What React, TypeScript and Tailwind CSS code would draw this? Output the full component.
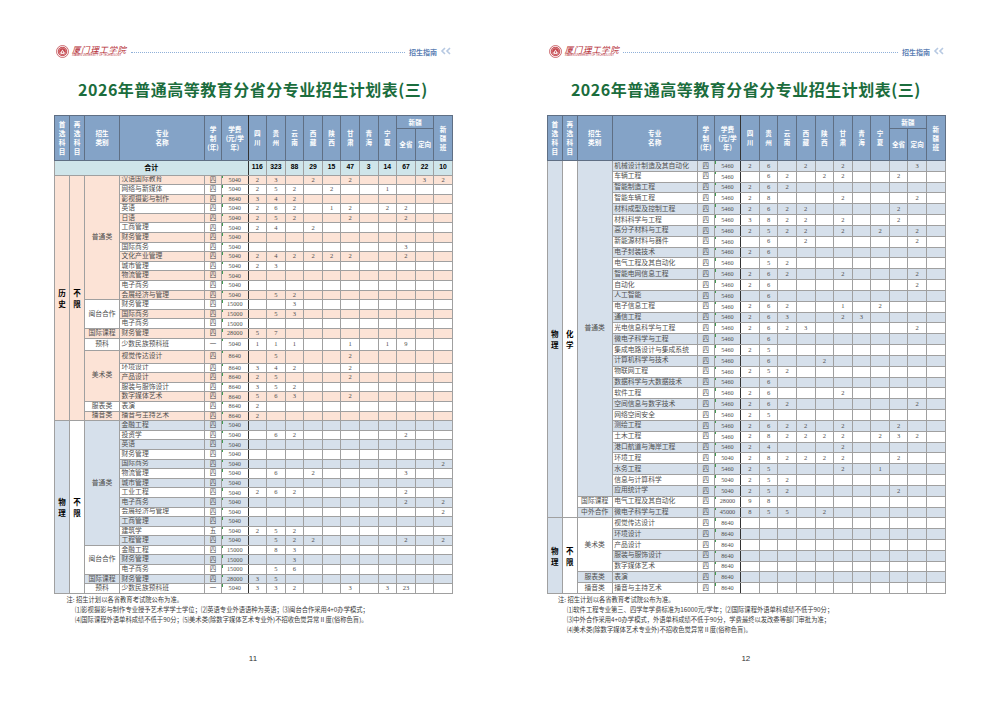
import React from "react";

type Row = { n: string; y: string; f: string; v: string; h?: string };
type Cat = { name: string; bg: string; rows: Row[] };
type Group = {
  a: string[];
  b: string[];
  aBg: string;
  bBg: string;
  shade: string;
  startShade: boolean;
  h: string;
  cats: Cat[];
};

const PINK = "bg-[#fce3d6]";
const BLUE = "bg-[#d6e0eb]";
const WHITE = "bg-white";

const r = (n: string, y: string, f: string, v: string, h?: string): Row => ({ n, y, f, v, h });

const leftGroups: Group[] = [
  {
    a: ["历", "史"],
    b: ["不", "限"],
    aBg: PINK,
    bBg: PINK,
    shade: PINK,
    startShade: true,
    h: "h-[9.6px]",
    cats: [
      {
        name: "普通类",
        bg: PINK,
        rows: [
          r("汉语国际教育", "四", "5040", "2,3,,2,,2,,,,3,2"),
          r("网络与新媒体", "四", "5040", "2,5,2,,2,,,1,,,"),
          r("影视摄影与制作", "四", "8640", "3,4,2"),
          r("英语", "四", "5040", "2,6,2,,1,2,,2,2,,"),
          r("日语", "四", "5040", "2,5,2,,,2,,,2,,"),
          r("工商管理", "四", "5040", "2,4,,2"),
          r("财务管理", "四", "5040", ""),
          r("国际商务", "四", "5040", ",,,,,,,,3"),
          r("文化产业管理", "四", "5040", "2,4,2,2,2,2,,,2"),
          r("城市管理", "四", "5040", "2,3"),
          r("物流管理", "四", "5040", ""),
          r("电子商务", "四", "5040", ""),
          r("会展经济与管理", "四", "5040", ",5,2"),
        ],
      },
      {
        name: "闽台合作",
        bg: WHITE,
        rows: [
          r("财务管理", "四", "15000", ",,3"),
          r("国际商务", "四", "15000", ",5,3"),
          r("电子商务", "四", "15000", ""),
        ],
      },
      { name: "国际课程", bg: PINK, rows: [r("财务管理", "四", "28000", "5,7")] },
      { name: "预科", bg: WHITE, rows: [r("少数民族预科班", "一", "5040", "1,1,1,,,1,,1,9", "h-[12px]")] },
      {
        name: "美术类",
        bg: PINK,
        rows: [
          r("视觉传达设计", "四", "8640", ",5,,,,2", "h-[13px]"),
          r("环境设计", "四", "8640", "3,4,2,,,2"),
          r("产品设计", "四", "8640", "2,5,,,,2"),
          r("服装与服饰设计", "四", "8640", "3,5,2"),
          r("数字媒体艺术", "四", "8640", "5,6,3,,,2"),
        ],
      },
      { name: "服表类", bg: WHITE, rows: [r("表演", "四", "8640", "2")] },
      { name: "播音类", bg: PINK, rows: [r("播音与主持艺术", "四", "8640", "2")] },
    ],
  },
  {
    a: ["物", "理"],
    b: ["不", "限"],
    aBg: BLUE,
    bBg: WHITE,
    shade: BLUE,
    startShade: true,
    h: "h-[9.6px]",
    cats: [
      {
        name: "普通类",
        bg: BLUE,
        rows: [
          r("金融工程", "四", "5040", ""),
          r("投资学", "四", "5040", ",6,2,,,,,,2"),
          r("英语", "四", "5040", ""),
          r("财务管理", "四", "5040", ""),
          r("国际商务", "四", "5040", ",,,,,,,,,,2"),
          r("物流管理", "四", "5040", ",6,,2,,,,,3"),
          r("城市管理", "四", "5040", ""),
          r("工业工程", "四", "5040", "2,6,2,,,,,,2"),
          r("电子商务", "四", "5040", ",,,,,,,,2,,2"),
          r("会展经济与管理", "四", "5040", ",,,,,,,,,,2"),
          r("工商管理", "四", "5040", ""),
          r("建筑学", "五", "5040", "2,5,2"),
          r("工程管理", "四", "5040", ",5,2,2,,,,,2,,2"),
        ],
      },
      {
        name: "闽台合作",
        bg: WHITE,
        rows: [
          r("金融工程", "四", "15000", ",8,3"),
          r("财务管理", "四", "15000", ",,3"),
          r("电子商务", "四", "15000", ",5,6"),
        ],
      },
      { name: "国际课程", bg: BLUE, rows: [r("财务管理", "四", "28000", "3,5")] },
      { name: "预科", bg: WHITE, rows: [r("少数民族预科班", "一", "5040", "3,3,2,,,3,,3,23")] },
    ],
  },
];

const rightGroups: Group[] = [
  {
    a: ["物", "理"],
    b: ["化", "学"],
    aBg: BLUE,
    bBg: WHITE,
    shade: BLUE,
    startShade: true,
    h: "h-[10.83px]",
    cats: [
      {
        name: "普通类",
        bg: BLUE,
        rows: [
          r("机械设计制造及其自动化", "四", "5460", "2,6,,2,,2,,,,3,"),
          r("车辆工程", "四", "5460", ",6,2,,2,2,,,2,,"),
          r("智能制造工程", "四", "5460", "2,6,2"),
          r("智能车辆工程", "四", "5460", "2,8,,,,2,,,,2,"),
          r("材料成型及控制工程", "四", "5460", "2,6,2,2,,,,,2"),
          r("材料科学与工程", "四", "5460", "3,8,2,2,,2,,,2"),
          r("高分子材料与工程", "四", "5460", "2,5,2,2,,2,,2,,2"),
          r("新能源材料与器件", "四", "5460", ",6,,2,,,,,,2"),
          r("电子封装技术", "四", "5460", "2,6"),
          r("电气工程及其自动化", "四", "5460", ",5,2"),
          r("智能电网信息工程", "四", "5460", "2,6,2,,,2,,,,2"),
          r("自动化", "四", "5460", "2,6,,,,,,,,2"),
          r("人工智能", "四", "5460", ",6"),
          r("电子信息工程", "四", "5460", "2,6,2,,,1,,2"),
          r("通信工程", "四", "5460", "2,6,3,,,2,3"),
          r("光电信息科学与工程", "四", "5460", "2,6,2,3,,,,,,2"),
          r("微电子科学与工程", "四", "5460", ",6"),
          r("集成电路设计与集成系统", "四", "5460", "2,5"),
          r("计算机科学与技术", "四", "5460", ",6,,,2"),
          r("物联网工程", "四", "5460", "2,5,2"),
          r("数据科学与大数据技术", "四", "5460", ",6"),
          r("软件工程", "四", "5460", "2,6,,,,2"),
          r("空间信息与数字技术", "四", "5460", "2,6,2,,,,,,,2"),
          r("网络空间安全", "四", "5460", "2,5"),
          r("测绘工程", "四", "5460", "2,6,2,2,,2,,,2"),
          r("土木工程", "四", "5460", "2,8,2,2,2,2,,2,3,2"),
          r("港口航道与海岸工程", "四", "5460", "2,4,,,,2"),
          r("环境工程", "四", "5040", "2,8,2,2,2,2,,,2"),
          r("水务工程", "四", "5460", "2,5,,,,2,,1"),
          r("信息与计算科学", "四", "5040", "2,5,2"),
          r("应用统计学", "四", "5040", "2,5,2,,,,,,2"),
        ],
      },
      { name: "国际课程", bg: WHITE, rows: [r("电气工程及其自动化", "四", "28000", "9,8")] },
      { name: "中外合作", bg: BLUE, rows: [r("微电子科学与工程", "四", "45000", "8,5,5,,2")] },
    ],
  },
  {
    a: ["物", "理"],
    b: ["不", "限"],
    aBg: BLUE,
    bBg: WHITE,
    shade: BLUE,
    startShade: false,
    h: "h-[10.83px]",
    cats: [
      {
        name: "美术类",
        bg: WHITE,
        rows: [
          r("视觉传达设计", "四", "8640", ""),
          r("环境设计", "四", "8640", ""),
          r("产品设计", "四", "8640", ""),
          r("服装与服饰设计", "四", "8640", ""),
          r("数字媒体艺术", "四", "8640", ""),
        ],
      },
      { name: "服表类", bg: BLUE, rows: [r("表演", "四", "8640", "")] },
      { name: "播音类", bg: WHITE, rows: [r("播音与主持艺术", "四", "8640", "")] },
    ],
  },
];

const leftTotals = ["116", "323", "88", "29", "15", "47", "3", "14", "67", "22", "10"];

const bd = "border border-[#a0a0a0]";
const hb = "border border-[#5f6f84]";
const serif = "font-['Liberation_Serif','Noto_Sans_CJK_SC',serif] text-[#4f4f4f]";
const thickR = "border-r-[1.5px] border-r-[#333333]";

function Stack({ chars }: { chars: string[] }) {
  return (
    <>
      {chars.map((c, i) => (
        <div key={i}>{c}</div>
      ))}
    </>
  );
}

function HeaderRows() {
  const th = `${hb} p-0 align-middle text-center font-bold text-white text-[6.6px] leading-[9px]`;
  const provinces = [
    ["四", "川"],
    ["贵", "州"],
    ["云", "南"],
    ["西", "藏"],
    ["陕", "西"],
    ["甘", "肃"],
    ["青", "海"],
    ["宁", "夏"],
  ];
  return (
    <thead className="bg-[#84a3c7] font-['Noto_Sans_CJK_SC',sans-serif]">
      <tr className="h-[13px]">
        <th rowSpan={2} className={th}>
          <Stack chars={["首", "选", "科", "目"]} />
        </th>
        <th rowSpan={2} className={th}>
          <Stack chars={["再", "选", "科", "目"]} />
        </th>
        <th rowSpan={2} className={th}>
          <Stack chars={["招生", "类别"]} />
        </th>
        <th rowSpan={2} className={th}>
          <Stack chars={["专业", "名称"]} />
        </th>
        <th rowSpan={2} className={th}>
          <Stack chars={["学", "制", "(年)"]} />
        </th>
        <th rowSpan={2} className={`${th} ${thickR}`}>
          <Stack chars={["学费", "(元/学", "年)"]} />
        </th>
        {provinces.map((p, i) => (
          <th key={i} rowSpan={2} className={th}>
            <Stack chars={p} />
          </th>
        ))}
        <th colSpan={2} className={th}>
          新疆
        </th>
        <th rowSpan={2} className={th}>
          <Stack chars={["新", "疆", "班"]} />
        </th>
      </tr>
      <tr className="h-[32px]">
        <th className={th}>全省</th>
        <th className={th}>定向</th>
      </tr>
    </thead>
  );
}

function DataTable({ groups, totals }: { groups: Group[]; totals?: string[] }) {
  return (
    <table className="table-fixed border-collapse w-[398px] border-[1.5px] border-[#333333]">
      <colgroup>
        <col className="w-[15px]" />
        <col className="w-[15px]" />
        <col className="w-[35px]" />
        <col className="w-[85px]" />
        <col className="w-[17px]" />
        <col className="w-[26.5px]" />
        {Array.from({ length: 11 }).map((_, i) => (
          <col key={i} className="w-[18.59px]" />
        ))}
      </colgroup>
      <HeaderRows />
      <tbody>
        {totals && (
          <tr className="h-[14.5px] bg-[#cfe5ea] font-['Liberation_Sans','Noto_Sans_CJK_SC',sans-serif] text-black font-bold">
            <td colSpan={6} className={`${bd} ${thickR} text-center text-[7px] leading-none`}>
              合计
            </td>
            {totals.map((t, i) => (
              <td key={i} className={`${bd} text-center text-[6.8px] leading-none`}>
                {t}
              </td>
            ))}
          </tr>
        )}
        {groups.map((g, gi) => {
          const total = g.cats.reduce((s, c) => s + c.rows.length, 0);
          let idx = 0;
          return g.cats.map((c, ci) =>
            c.rows.map((row, ri) => {
              const k = idx++;
              const shaded = g.startShade ? k % 2 === 0 : k % 2 === 1;
              const vals = row.v.split(",");
              while (vals.length < 11) vals.push("");
              const firstOfGroup = ci === 0 && ri === 0;
              return (
                <tr
                  key={`${gi}-${ci}-${ri}`}
                  className={`${row.h ?? g.h} ${shaded ? g.shade : WHITE} ${
                    firstOfGroup && gi > 0 ? "border-t-[1.5px] border-t-[#333333]" : ""
                  } ${serif}`}
                >
                  {firstOfGroup && (
                    <td
                      rowSpan={total}
                      className={`${bd} ${g.aBg} p-0 text-center font-bold text-black text-[7.5px] leading-[11px] font-['Noto_Sans_CJK_SC',sans-serif]`}
                    >
                      <Stack chars={g.a} />
                    </td>
                  )}
                  {firstOfGroup && (
                    <td
                      rowSpan={total}
                      className={`${bd} ${g.bBg} p-0 text-center font-bold text-black text-[7.5px] leading-[11px] font-['Noto_Sans_CJK_SC',sans-serif]`}
                    >
                      <Stack chars={g.b} />
                    </td>
                  )}
                  {ri === 0 && (
                    <td rowSpan={c.rows.length} className={`${bd} ${c.bg} p-0 text-center text-[6.8px] leading-none`}>
                      {c.name}
                    </td>
                  )}
                  <td className={`${bd} p-0 pl-[1.5px] text-left text-[6.8px] leading-none whitespace-nowrap overflow-hidden`}>
                    {row.n}
                  </td>
                  <td className={`${bd} p-0 text-center text-[6.5px] leading-none`}>{row.y}</td>
                  <td className={`${bd} ${thickR} relative p-0 text-center text-[6.2px] leading-none`}>
                    <span className="absolute left-0 top-0 w-[1px] h-[2.5px] bg-[#3f9b4f]" />
                    {row.f}
                  </td>
                  {vals.slice(0, 11).map((v, vi) => (
                    <td key={vi} className={`${bd} p-0 text-center text-[6.5px] leading-none`}>
                      {v}
                    </td>
                  ))}
                </tr>
              );
            })
          );
        })}
      </tbody>
    </table>
  );
}

function Emblem() {
  return (
    <svg width="13" height="13" viewBox="0 0 26 26" className="shrink-0">
      <circle cx="13" cy="13" r="12" fill="none" stroke="#b8323a" strokeWidth="1.4" />
      <circle cx="13" cy="13" r="9.5" fill="#c4474e" />
      <circle cx="13" cy="13" r="7.2" fill="none" stroke="#f3d3d5" strokeWidth="0.8" />
      <path d="M8 16 L13 9 L18 16 Z" fill="#f7e4e5" />
      <rect x="9" y="16" width="8" height="2" fill="#f7e4e5" />
      <rect x="12.2" y="12.5" width="1.6" height="3.5" fill="#c4474e" />
    </svg>
  );
}

function Chevrons() {
  return (
    <svg width="12" height="8" viewBox="0 0 12 8" className="ml-[3px] shrink-0">
      <path d="M5 1 L2 4 L5 7" fill="none" stroke="#b7c9e2" strokeWidth="1.6" />
      <path d="M10 1 L7 4 L10 7" fill="none" stroke="#b7c9e2" strokeWidth="1.6" />
    </svg>
  );
}

function PageHeader() {
  return (
    <div className="flex items-center h-[18px]">
      <div className="ml-[2px] flex items-center">
        <Emblem />
        <div className="ml-[3px] flex flex-col items-start">
          <span className="text-[8.5px] leading-[9px] tracking-[0.6px] text-[#b42a33] italic font-['Noto_Sans_CJK_SC',serif]">
            厦门理工学院
          </span>
          <span className="text-[2.6px] leading-[3px] text-[#b42a33] font-['Liberation_Sans',sans-serif] whitespace-nowrap">
            XIAMEN UNIVERSITY OF TECHNOLOGY
          </span>
        </div>
      </div>
      <div className="flex-1 mx-[4px] mt-[3px] border-b border-dotted border-[#8fb0d9]" />
      <span className="text-[7px] leading-none font-bold text-[#5d80b4] mt-[2px] font-['Noto_Sans_CJK_SC',sans-serif]">
        招生指南
      </span>
      <Chevrons />
    </div>
  );
}

function Page({
  pad,
  groups,
  totals,
  notes,
  noteIndent,
  num,
}: {
  pad: string;
  groups: Group[];
  totals?: string[];
  notes: string[];
  noteIndent: string[];
  num: string;
}) {
  return (
    <div className={`w-[500px] h-[710px] flex flex-col pt-[42px] ${pad}`}>
      <PageHeader />
      <div className="mt-[19px] h-[20px] leading-[20px] text-center text-[16px] tracking-[0.5px] font-bold text-[#1b6d3d] font-['Noto_Sans_CJK_SC',sans-serif] whitespace-nowrap">
        2026年普通高等教育分省分专业招生计划表(三)
      </div>
      <div className="mt-[16px]">
        <DataTable groups={groups} totals={totals} />
      </div>
      <div className="mt-[1px] text-[6.3px] leading-[10px] text-[#3a3a3a] font-['Noto_Sans_CJK_SC',sans-serif] whitespace-nowrap">
        {notes.map((n, i) => (
          <div key={i} className={i === 0 ? noteIndent[0] : noteIndent[1]}>
            {n}
          </div>
        ))}
      </div>
      <div className="mt-auto mb-[46px] text-center text-[8px] leading-[10px] text-[#333] font-['Liberation_Sans',sans-serif]">
        {num}
      </div>
    </div>
  );
}

export default function App() {
  return (
    <div className="w-[1000px] h-[710px] flex bg-white overflow-hidden">
      <Page
        pad="pl-[54px] pr-[48px]"
        groups={leftGroups}
        totals={leftTotals}
        notes={[
          "注: 招生计划以各省教育考试院公布为准。",
          "⑴影视摄影与制作专业授予艺术学学士学位；⑵英语专业外语语种为英语；⑶闽台合作采用4+0办学模式；",
          "⑷国际课程外语单科成绩不低于90分；⑸美术类(除数字媒体艺术专业外)不招收色觉异常Ⅱ度(俗称色盲)。",
        ]}
        noteIndent={["pl-[12.5px]", "pl-[21px]"]}
        num="11"
      />
      <Page
        pad="pl-[46.7px] pr-[55px]"
        groups={rightGroups}
        notes={[
          "注: 招生计划以各省教育考试院公布为准。",
          "⑴软件工程专业第三、四学年学费标准为16000元/学年；⑵国际课程外语单科成绩不低于90分；",
          "⑶中外合作采用4+0办学模式，外语单科成绩不低于90分，学费最终以发改委等部门审批为准；",
          "⑷美术类(除数字媒体艺术专业外)不招收色觉异常Ⅱ度(俗称色盲)。",
        ]}
        noteIndent={["pl-[11.3px]", "pl-[20.3px]"]}
        num="12"
      />
    </div>
  );
}
